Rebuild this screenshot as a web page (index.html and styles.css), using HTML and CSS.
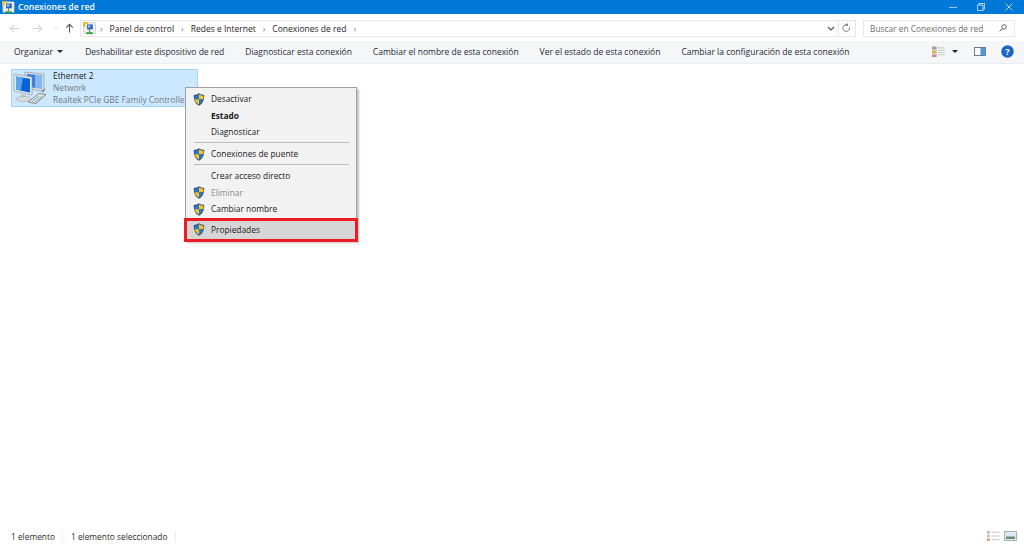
FILE: index.html
```html
<!DOCTYPE html>
<html lang="es">
<head>
<meta charset="utf-8">
<title>Conexiones de red</title>
<link rel="stylesheet" href="styles.css">
</head>
<body>
<svg class="defs" width="0" height="0">
  <defs>
    <symbol id="shield" viewBox="0 0 12 13">
      <path d="M6 .3C4.600 1.300 2.800 1.900 .8 2c-.1 4.500 1 8.400 5.200 10.700C10.200 10.400 11.300 6.500 11.200 2 9.200 1.900 7.400 1.300 6 .3z" fill="#1d3f6e"/>
      <path d="M6 1.200v5H1.500C1.400 5 1.400 3.800 1.500 2.700 3.200 2.500 4.700 2 6 1.200z" fill="#2a78c8"/>
      <path d="M6 1.200c1.300.8 2.800 1.300 4.500 1.500.1 1.100.1 2.300 0 3.500H6z" fill="#f7c325"/>
      <path d="M1.600 6.200H6v5.600C3.300 10.200 2 8.400 1.600 6.200z" fill="#f7c325"/>
      <path d="M6 6.200h4.400C10 8.400 8.700 10.200 6 11.800z" fill="#2a78c8"/>
    </symbol>
    <symbol id="net" viewBox="0 0 16 16">
      <rect x="1" y="1" width="14" height="13" fill="#f0f0f0" stroke="#a8a8a8" stroke-width=".6"/>
      <path d="M5 3h7v6H5z" fill="#2a5fc0"/>
      <path d="M6 4h3v3H6z" fill="#9cc4ef"/>
      <path d="M8 9v3" stroke="#3b8f48" stroke-width="1.500"/>
      <path d="M4 12.500h8V15H4z" fill="#39a24a"/>
      <path d="M0 0h6v2.500H3V6H0z" fill="#e5bd3a"/>
    </symbol>
  </defs>
</svg>
<div class="window">
  <header class="titlebar">
    <svg class="title-icon"><use href="#net"/></svg>
    <span class="title-text">Conexiones de red</span>
    <div class="win-buttons">
      <svg class="win-btn" viewBox="0 0 10 10"><path d="M0 5.500h10" stroke="#cfe6f7" fill="none"/></svg>
      <svg class="win-btn" viewBox="0 0 10 10"><path d="M.5 2.500h7v7h-7zM2.500 2.500v-2h7v7h-2" stroke="#e4f1fb" fill="none"/></svg>
      <svg class="win-btn" viewBox="0 0 10 10"><path d="M.5.500l9 9M9.500.500l-9 9" stroke="#e4f1fb" fill="none"/></svg>
    </div>
  </header>

  <nav class="addressrow">
    <div class="navs">
      <svg class="nav-ic" viewBox="0 0 12 10"><path d="M11 5H1.500M5.500 1l-4 4 4 4" stroke="#d3d3d3" fill="none" stroke-width="1.200"/></svg>
      <svg class="nav-ic" viewBox="0 0 12 10"><path d="M1 5h9.500M6.500 1l4 4-4 4" stroke="#d3d3d3" fill="none" stroke-width="1.200"/></svg>
      <svg class="nav-small" viewBox="0 0 8 5"><path d="M1 1l3 3 3-3" stroke="#d3d3d3" fill="none"/></svg>
      <svg class="nav-ic up" viewBox="0 0 10 12"><path d="M5 11.500V1.500M1 5.500l4-4 4 4" stroke="#555" fill="none" stroke-width="1.300"/></svg>
    </div>
    <div class="address">
      <svg class="addr-icon"><use href="#net"/></svg>
      <span class="crumb-sep">›</span><span>Panel de control</span>
      <span class="crumb-sep">›</span><span>Redes e Internet</span>
      <span class="crumb-sep">›</span><span>Conexiones de red</span>
      <span class="crumb-sep">›</span>
      <span class="addr-right">
        <svg class="addr-chev" viewBox="0 0 8 5"><path d="M1 1l3 3 3-3" stroke="#555" fill="none" stroke-width="1.200"/></svg>
        <i class="addr-div"></i>
        <svg class="addr-refresh" viewBox="0 0 10 12"><path d="M8.500 5a4 4 0 1 1-2-2.500M6.200 .5v2.500h-2.500" stroke="#666" fill="none"/></svg>
      </span>
    </div>
    <div class="search">
      <span>Buscar en Conexiones de red</span>
      <svg class="search-ic" viewBox="0 0 10 10"><circle cx="6.300" cy="3.700" r="2.800" stroke="#444" fill="none"/><path d="M4.300 5.700L.8 9.200" stroke="#444" stroke-width="1.200"/></svg>
    </div>
  </nav>

  <div class="toolbar">
    <span class="tool organize">Organizar <i class="caret"></i></span>
    <span class="tool">Deshabilitar este dispositivo de red</span>
    <span class="tool">Diagnosticar esta conexión</span>
    <span class="tool">Cambiar el nombre de esta conexión</span>
    <span class="tool">Ver el estado de esta conexión</span>
    <span class="tool">Cambiar la configuración de esta conexión</span>
    <div class="tool-right">
      <svg class="view-ic" viewBox="0 0 14 12">
        <rect x="0" y="0" width="5" height="3.500" fill="#9aa6a0"/><rect x="0" y="4.500" width="5" height="3" fill="#d8b04a"/><rect x="0" y="8.500" width="5" height="3" fill="#c98a8a"/>
        <path d="M6.500 1.500h7M6.500 4h7M6.500 6.500h7M6.500 9h7" stroke="#c2c2c2"/>
      </svg>
      <i class="caret view-caret"></i>
      <svg class="pane-ic" viewBox="0 0 13 10"><rect x=".5" y=".5" width="12" height="9" fill="#fff" stroke="#5a6e80"/><rect x="7" y="1" width="5" height="8" fill="#4d97dc"/></svg>
      <svg class="help-ic" viewBox="0 0 14 14"><circle cx="7" cy="7" r="6.700" fill="#1a66c8"/><text x="7" y="10.600" class="help-q">?</text></svg>
    </div>
  </div>

  <main class="content">
    <div class="tile">
      <svg class="tile-icon" viewBox="0 0 34 34">
        <path d="M12 1l19 2v17l-19-2z" fill="#d5dbe2" stroke="#8a9199" stroke-width=".6"/>
        <path d="M14 3l15 1.600v13L14 16z" fill="#3a7fdc"/>
        <path d="M22 3.800l7 .8v13l-7-.8z" fill="#85b8ee"/>
        <path d="M1 3l18 3v18L1 20z" fill="#e3e7ec" stroke="#8a9199" stroke-width=".6"/>
        <path d="M3 5.500l14 2.300v14L3 18.500z" fill="#0a63d6"/>
        <path d="M3 5.500l7 1.200-2.500 12.800L3 18.500z" fill="#5aa7ee"/>
        <path d="M8 23l5 .8v3H8z" fill="#c3c6ca"/>
        <ellipse cx="10.500" cy="28" rx="7.500" ry="2.600" fill="#d8dadc" stroke="#9a9ea3" stroke-width=".5"/>
        <path d="M15 31l11-8.500 7 1-10 9z" fill="#e4e6e6" stroke="#6f7478" stroke-width=".8"/>
        <path d="M19 30.500l7-5.500M22 31l7-5.500" stroke="#6f98a8" stroke-width=".9"/>
        <path d="M29 21l3-3" stroke="#7a7f84" stroke-width="1.200"/>
      </svg>
      <div class="tile-text">
        <div class="tile-name">Ethernet 2</div>
        <div class="tile-sub">Network</div>
        <div class="tile-sub">Realtek PCIe GBE Family Controller</div>
      </div>
    </div>

    <div class="menu">
      <div class="menu-item"><svg class="shield"><use href="#shield"/></svg>Desactivar</div>
      <div class="menu-item bold">Estado</div>
      <div class="menu-item">Diagnosticar</div>
      <div class="menu-sep"></div>
      <div class="menu-item"><svg class="shield"><use href="#shield"/></svg>Conexiones de puente</div>
      <div class="menu-sep"></div>
      <div class="menu-item">Crear acceso directo</div>
      <div class="menu-item disabled"><svg class="shield"><use href="#shield"/></svg>Eliminar</div>
      <div class="menu-item"><svg class="shield"><use href="#shield"/></svg>Cambiar nombre</div>
      <div class="menu-item highlighted"><svg class="shield"><use href="#shield"/></svg>Propiedades</div>
    </div>
  </main>

  <footer class="statusbar">
    <span class="status-a">1 elemento</span>
    <span class="status-b">1 elemento seleccionado</span>
    <div class="status-right">
      <svg class="st-ic" viewBox="0 0 13 10"><rect width="3" height="2.500" fill="#b8bcc0"/><rect y="3.700" width="3" height="2.500" fill="#d8c080"/><rect y="7.400" width="3" height="2.500" fill="#d99"/><path d="M4.500 1.200h8M4.500 5h8M4.500 8.700h8" stroke="#c8c8c8"/></svg>
      <svg class="st-ic" viewBox="0 0 13 10"><rect x=".5" y=".5" width="12" height="9" fill="#dbe9f3" stroke="#a5b2bc"/><rect x="2" y="5.500" width="9" height="2.500" fill="#6c8a72"/></svg>
    </div>
  </footer>
</div>
</body>
</html>
```
FILE: styles.css
```css
* { box-sizing: border-box; }
html, body { margin: 0; height: 100%; overflow: hidden; }
body { font-family: "Open Sans", "Noto Sans", "Liberation Sans", sans-serif; font-size: 8.350px; color: #1e1e1e; background: #fff; }
.defs { position: absolute; }
.window { height: 545px; display: flex; flex-direction: column; position: relative; }

.titlebar { height: 14px; background: #0078d7; display: flex; align-items: center; color: #fff; padding-left: 2px; flex: none; }
.title-icon { width: 13px; height: 13px; margin-right: 3px; }
.title-text { font-weight: 600; font-size: 8.600px; }
.win-buttons { margin-left: auto; display: flex; }
.win-btn { width: 8px; height: 8px; margin-right: 20px; }
.win-btn:last-child { margin-right: 11px; }

.addressrow { height: 27px; display: flex; align-items: center; padding: 1px 9px 0 9px; flex: none; }
.navs { display: flex; align-items: center; width: 71px; flex: none; }
.nav-ic { width: 11px; height: 9px; margin-right: 12px; }
.nav-small { width: 6px; height: 4px; margin: 0 6px 0 -2px; }
.nav-ic.up { margin-right: 0; height: 10px; width: 9px; }
.address { width: 776px; height: 17px; border: 1px solid #e6e6e6; display: flex; align-items: center; gap: 7px; padding-left: 2px; flex: none; font-size: 8.500px; }
.addr-icon { width: 13px; height: 13px; margin-right: -3px; }
.crumb-sep { color: #777; }
.addr-right { margin-left: auto; display: flex; align-items: center; height: 100%; }
.addr-chev { width: 8px; height: 5px; margin-right: 3px; }
.addr-div { width: 1px; height: 100%; background: #eaeaea; margin-right: 3px; }
.addr-refresh { width: 9px; height: 10px; margin-right: 4px; }
.search { margin-left: 7px; flex: 1; height: 17px; border: 1px solid #e6e6e6; display: flex; align-items: center; justify-content: space-between; padding: 0 7px 0 6px; color: #6d6d6d; }
.search-ic { width: 8px; height: 8px; }

.toolbar { height: 23px; background: #f5f6f7; border-bottom: 1px solid #e8ecf0; display: flex; align-items: center; padding: 0 10px 1px 14px; color: #1f2b3b; flex: none; font-size: 8.500px; }
.tool { margin-right: 21px; white-space: nowrap; }
.organize { margin-right: 22px; }
.caret { display: inline-block; width: 0; height: 0; border: 3px solid transparent; border-top: 3px solid #1f2b3b; border-bottom: 0; margin-left: 2px; vertical-align: 2px; }
.tool-right { margin-left: auto; display: flex; align-items: center; }
.view-ic { width: 13px; height: 12px; }
.view-caret { margin: 0 0 0 7px; }
.pane-ic { width: 12px; height: 9px; margin-left: 16px; }
.help-ic { width: 13px; height: 13px; margin-left: 15px; }
.help-q { font-size: 10px; font-weight: 700; fill: #fff; text-anchor: middle; }

.content { flex: 1; position: relative; padding: 5px 0 0 11px; }
.tile { width: 187px; height: 38px; background: #cce8ff; border: 1px solid #9fd3f7; display: flex; padding: 0 0 0 1px; }
.tile-icon { width: 34px; height: 34px; flex: none; margin-top: 1px; }
.tile-text { margin-left: 6px; line-height: 12px; white-space: nowrap; }
.tile-name { color: #1a1a1a; }
.tile-sub { color: #6f7a82; }

.menu { position: absolute; left: 185px; top: 23px; width: 172px; height: 154px; background: #f2f2f2; border: 1px solid #a0a0a0; box-shadow: 2px 2px 2px rgba(0,0,0,.25); padding-top: 2.500px; }
.menu-item { height: 16.500px; padding-left: 25px; display: flex; align-items: center; position: relative; white-space: nowrap; color: #1a1a1a; }
.menu-item .shield { position: absolute; left: 7px; top: 2px; width: 12px; height: 13px; }
.bold { font-weight: 700; }
.disabled { color: #8a8a8a; }
.menu-sep { height: 1px; background: #bdbdbd; margin: 2px 7px 2.500px 8px; }
.menu-item.highlighted { position: absolute; left: 1px; right: 1px; top: 132.500px; height: 18px; padding-left: 24px; background: #d6d6d6; outline: 3px solid #ed1c24; }
.highlighted .shield { left: 6px; top: 2px; }

.statusbar { height: 18px; display: flex; align-items: center; padding: 0 7px 0 11px; color: #2b2b2b; flex: none; }
.status-a { padding-right: 7px; margin-right: 8px; border-right: 1px solid #eee; }
.status-b { padding-right: 7px; border-right: 1px solid #eee; }
.status-right { margin-left: auto; display: flex; gap: 4px; }
.st-ic { width: 13px; height: 10px; }
```
